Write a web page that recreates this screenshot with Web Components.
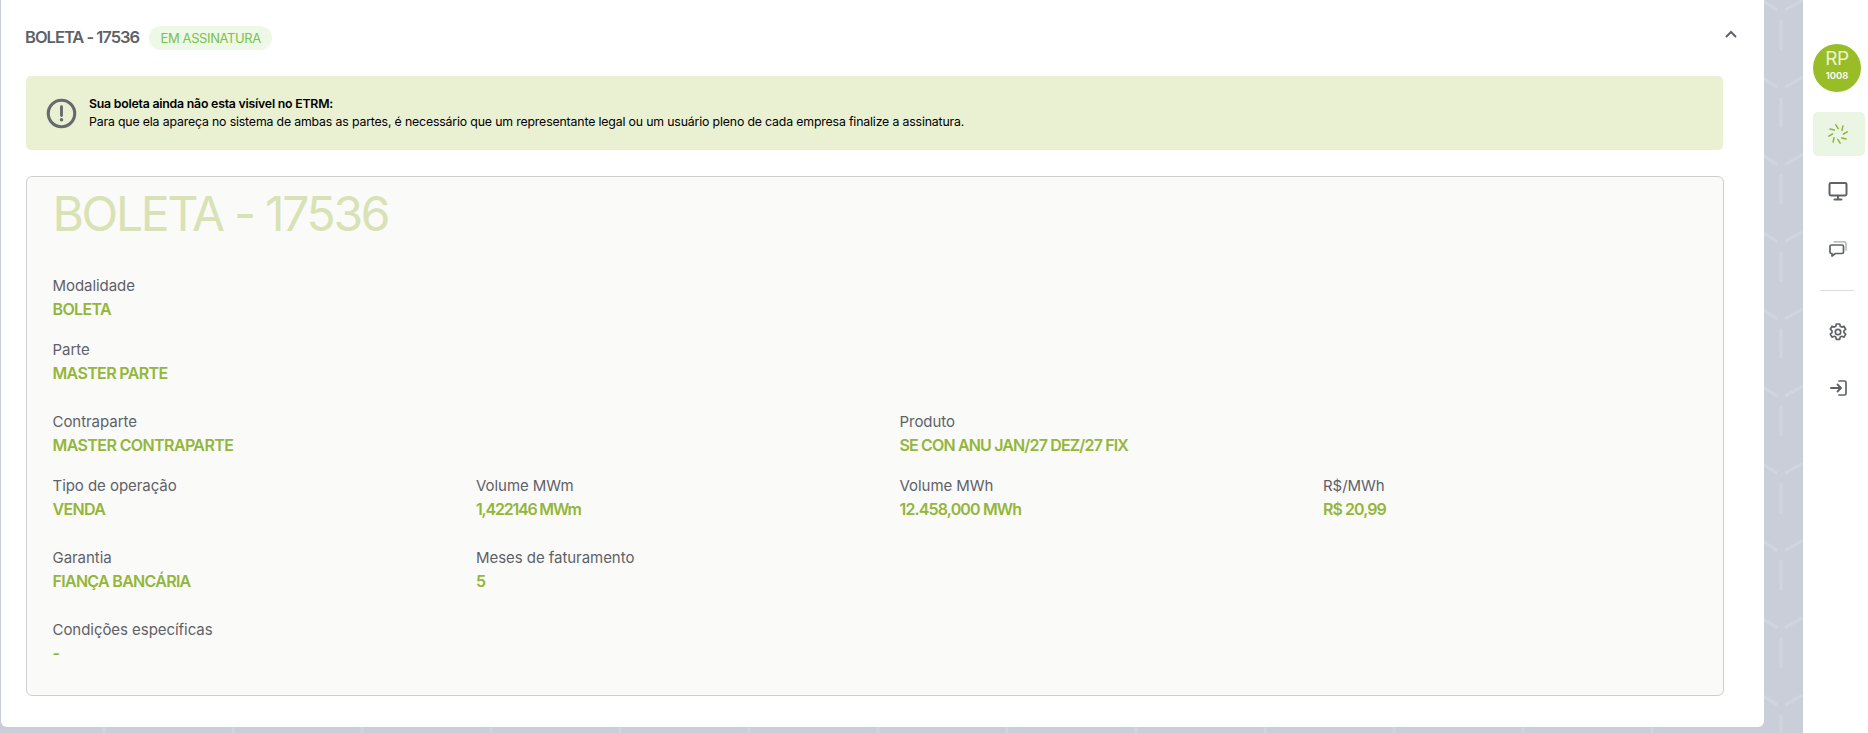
<!DOCTYPE html>
<html lang="pt-BR"><head><meta charset="utf-8"><title>Boleta</title>
<style>
html,body{margin:0;padding:0;height:100%;overflow:hidden}
body{font-family:Inter,"Noto Sans","Liberation Sans",sans-serif}
</style></head><body>
<app-shell>
  <boleta-card slot="main"></boleta-card>
  <side-nav slot="side"></side-nav>
</app-shell>
<script>
const def=(name,html)=>customElements.define(name,class extends HTMLElement{
  connectedCallback(){ if(this.shadowRoot) return; const r=this.attachShadow({mode:'open'}); r.innerHTML=typeof html==='function'?html(this):html; }
});
const rays=[0,45,90,135,180,225,270,315].map(a=>`<path d="M9.800 2.800l2.400 3.800" transform="rotate(${a} 12 12)"></path>`).join('');
const ICONS={
 spin:`<g stroke="#8db53a" stroke-width="1.500">${rays}</g>`,
 monitor:`<rect x="3.500" y="4" width="17" height="12.500" rx="1.400" stroke-width="2"></rect><path d="M12 17v3M8.500 20.500h7" stroke-width="2"></path>`,
 chat:`<path d="M5.500 9h10.500a1.500 1.500 0 0 1 1.500 1.500v5.500a1.500 1.500 0 0 1-1.500 1.500H9.500l-3.500 2.500v-2.500h-.5A1.500 1.500 0 0 1 4 16v-5.500A1.500 1.500 0 0 1 5.500 9z"></path><path d="M8 5.800h10.500A1.500 1.500 0 0 1 20 7.300V14" stroke="#a4a9ae" stroke-width="1.300"></path>`,
 gear:`<path d="M10.300 4h3.400l.5 2.300 1.600.8 2.200-.8 1.700 2.900-1.700 1.600v1.800l1.700 1.600-1.700 2.900-2.200-.8-1.600.8-.5 2.300h-3.400l-.5-2.300-1.600-.8-2.200.8-1.700-2.900 1.700-1.600v-1.800L4.300 9.200 6 6.300l2.200.8 1.600-.8z"></path><circle cx="12" cy="12" r="2.700"></circle>`,
 login:`<path d="M13 5h5.500A1.500 1.500 0 0 1 20 6.500v11a1.500 1.500 0 0 1-1.500 1.500H13"></path><path d="M5 12h10M11.500 8.500L15 12l-3.500 3.500" stroke-width="1.900"></path>`
};
def('app-shell',`<style>
:host{display:flex;width:1868px;height:733px;overflow:hidden;background:#c9ced8}
.main{position:relative;width:1803px;height:733px;padding:0 39px 6px 1px;box-sizing:border-box}
svg.bg{position:absolute;inset:0;width:100%;height:100%}
.slot{position:relative;height:100%;display:block}
::slotted([slot=side]){flex:0 0 65px}
</style>
<div class="main"><svg class="bg" aria-hidden="true"><defs><pattern id="h" width="129" height="77.2" patternUnits="userSpaceOnUse" x="1716" y="-3">
<path d="M47 4l14 9M69 13l18-10M65 23v30M65 -54v30" stroke="#d0d5de" stroke-width="3" fill="none"></path></pattern></defs><rect width="100%" height="100%" fill="url(#h)"></rect></svg>
<div class="slot"><slot name="main"></slot></div></div><slot name="side"></slot>`);
def('status-badge',`<style>:host{display:inline-flex;align-items:center;height:24px;padding:0 11.500px;margin-left:1px;border-radius:12px;background:#eef8e6;color:#79c24f;font-size:13px;letter-spacing:-.4px;white-space:nowrap}</style><slot></slot>`);
def('alert-box',`<style>:host{display:flex;align-items:center;height:74px;box-sizing:border-box;margin-right:1px;padding:0 18px 0 20px;gap:12px;background:#e9f1d2;border-radius:5px;color:#000;font-size:12.300px;line-height:18px;letter-spacing:-.155px}
svg{flex:none;width:31px;height:31px}b{display:block;font-weight:600;letter-spacing:-.22px}
</style><svg viewBox="0 0 30 30" aria-hidden="true"><circle cx="15" cy="15" r="12.800" fill="none" stroke="#666a6e" stroke-width="3"></circle><path d="M15 8.500v8.500" stroke="#666a6e" stroke-width="2.800" stroke-linecap="round"></path><circle cx="15" cy="21" r="1.700" fill="#666a6e"></circle></svg><div><b><slot name="t"></slot></b><slot></slot></div>`);
def('data-field',h=>`<style>:host{display:block;height:48px;font-size:15px;line-height:24px;color:#5e6268;letter-spacing:-.05px;white-space:nowrap}
.v{color:#93b63b;font-size:16px;line-height:23px;font-weight:600;letter-spacing:var(--ls,-.65px)}</style><div>${h.getAttribute('label')}</div><div class="v"><slot></slot></div>`);
def('field-grid',`<style>:host{display:grid;grid-template-columns:repeat(4,423.500px);row-gap:16px}
::slotted(.w2){grid-column:span 2}::slotted(.w4){grid-column:span 4}::slotted(.sp){margin-top:8px}</style><slot></slot>`);
def('boleta-card',`<style>
:host{display:block;height:100%;box-sizing:border-box;background:#fff;border-radius:0 0 6px 6px;padding:0 40px 0 25px;position:relative}
.head{display:flex;align-items:center;height:76px;gap:9px}
h2{margin:0 0 0 -1px;font-size:16.500px;font-weight:600;color:#5e6268;letter-spacing:-1px;white-space:nowrap;padding-bottom:3px}
.chev{position:absolute;left:1723px;top:29px;width:14px;height:10px}
.box{margin-top:26px;height:520px;box-sizing:border-box;border:1px solid #cfcfcf;border-radius:6px;background:#fafaf8;padding:0 0 0 25.500px}
h1{margin:0;height:74px;box-sizing:border-box;padding-top:6px;font-size:48px;line-height:62px;font-weight:400;color:#d8e2b4;letter-spacing:-2.300px;white-space:nowrap}
</style>
<div class="head"><h2>BOLETA - 17536</h2><status-badge>EM ASSINATURA</status-badge></div>
<svg class="chev" viewBox="0 0 14 10" aria-hidden="true"><path d="M2 8l5-5 5 5" fill="none" stroke="#5f6368" stroke-width="2"></path></svg>
<alert-box><span slot="t">Sua boleta ainda não esta visível no ETRM:</span>Para que ela apareça no sistema de ambas as partes, é necessário que um representante legal ou um usuário pleno de cada empresa finalize a assinatura.</alert-box>
<div class="box"><h1>BOLETA - 17536</h1>
<field-grid style="margin-top:23px">
<data-field class="w4" label="Modalidade">BOLETA</data-field>
<data-field class="w4" label="Parte">MASTER PARTE</data-field>
<data-field class="w2 sp" label="Contraparte" style="--ls:-.6px">MASTER CONTRAPARTE</data-field>
<data-field class="w2 sp" label="Produto" style="--ls:-.85px">SE CON ANU JAN/27 DEZ/27 FIX</data-field>
<data-field label="Tipo de operação">VENDA</data-field>
<data-field label="Volume MWm" style="--ls:-1.200px">1,422146 MWm</data-field>
<data-field label="Volume MWh" style="--ls:-.85px">12.458,000 MWh</data-field>
<data-field label="R$/MWh" style="--ls:-.95px">R$ 20,99</data-field>
<data-field class="sp" label="Garantia" style="--ls:-.7px">FIANÇA BANCÁRIA</data-field>
<data-field class="sp" style="grid-column:span 3" label="Meses de faturamento">5</data-field>
<data-field class="w4 sp" label="Condições específicas">-</data-field>
</field-grid></div>`);
def('nav-icon',h=>`<style>:host{display:flex;align-items:center;justify-content:center;width:52px;height:44px;margin-left:10px;border-radius:5px}
:host([active]){background:#eaf6e3}svg{width:24px;height:24px;margin-right:2px;fill:none;stroke:#5f6368;stroke-width:1.700;stroke-linecap:round;stroke-linejoin:round}</style><svg viewBox="0 0 24 24" aria-hidden="true">${ICONS[h.getAttribute('icon')]}</svg>`);
def('side-nav',`<style>:host{display:block;background:#fff;height:733px;position:relative}
.av{margin:44px 0 0 10px;width:48px;height:48px;box-sizing:border-box;padding-bottom:5px;border-radius:50%;background:#98bd27;display:flex;flex-direction:column;align-items:center;justify-content:center;color:#eef3cf;font-size:19px;line-height:18px;letter-spacing:-.4px}
.av small{font-size:9.500px;line-height:10px;margin-top:3px;font-weight:600;letter-spacing:0;color:#fff}
.list{display:flex;flex-direction:column;margin-top:20px}
nav-icon.i{margin-top:13px}
nav-icon.l{margin-top:12px}
hr{border:0;height:1px;background:#ddd;margin:20px 14px 19px 17px;width:34px}
</style>
<div class="av">RP<small>1008</small></div>
<div class="list">
<nav-icon active icon="spin"></nav-icon>
<nav-icon class="i" icon="monitor"></nav-icon>
<nav-icon class="i" icon="chat"></nav-icon>
<hr>
<nav-icon icon="gear"></nav-icon>
<nav-icon class="l" icon="login"></nav-icon>
</div>`);
</script></body></html>
